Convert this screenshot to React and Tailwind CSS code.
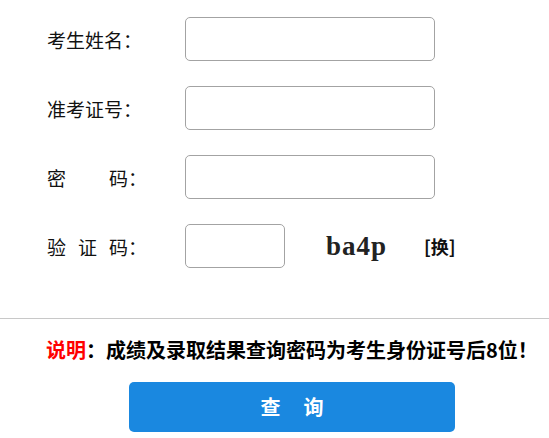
import React, { useState } from 'react';

// --- Score query form (考生成绩查询) ---
const Label = ({ chars, gap }) => (
  <div className="w-[138px] flex items-center text-[19px] text-[#111] leading-none" style={{ columnGap: gap }}>
    {chars.map((c, i) => (
      <span key={i}>{c}{i === chars.length - 1 ? '：' : ''}</span>
    ))}
  </div>
);

const App = () => {
  const [form, setForm] = useState({ name: '', no: '', pwd: '', code: '' });
  const update = (k) => (e) => setForm({ ...form, [k]: e.target.value });

  const inputCls = 'h-[44px] rounded-[5px] border border-[#a3a3a3] bg-white px-2 text-[16px] outline-none';

  return (
    <div className="min-h-screen bg-white font-['Noto_Sans_CJK_SC',sans-serif]">
      {/* Form rows */}
      <div className="pt-[17px] pl-[47px] flex flex-col gap-[25px]">
        <div className="flex items-center">
          <Label chars={['考', '生', '姓', '名']} gap="0px" />
          <input value={form.name} onChange={update('name')} className={`${inputCls} w-[250px]`} />
        </div>
        <div className="flex items-center">
          <Label chars={['准', '考', '证', '号']} gap="0px" />
          <input value={form.no} onChange={update('no')} className={`${inputCls} w-[250px]`} />
        </div>
        <div className="flex items-center">
          <Label chars={['密', '码']} gap="43px" />
          <input type="password" value={form.pwd} onChange={update('pwd')} className={`${inputCls} w-[250px]`} />
        </div>
        <div className="flex items-center">
          <Label chars={['验', '证', '码']} gap="12px" />
          <input value={form.code} onChange={update('code')} className={`${inputCls} w-[100px]`} />
          <span className="ml-[41px] font-['Liberation_Serif',serif] font-bold text-[27px] tracking-[1px] text-[#222] leading-none">ba4p</span>
          <span className="ml-[37px] font-bold text-[18px] text-[#111] leading-none cursor-pointer">[换]</span>
        </div>
      </div>

      {/* Divider */}
      <div className="mt-[50px] border-t border-[#c8c8c8]" />

      {/* Notice */}
      <p className="pt-[17px] pl-[46px] text-[20px] leading-[28px] font-bold text-black whitespace-nowrap">
        <span className="text-[#f00]">说明</span>：成绩及录取结果查询密码为考生身份证号后8位！
      </p>

      {/* Submit */}
      <div className="mt-[18px] pl-[129px]">
        <button className="w-[326px] h-[50px] rounded-[5px] bg-[#1a88e0] text-white text-[20px] font-bold flex items-center justify-center gap-[23px]">
          <span>查</span>
          <span>询</span>
        </button>
      </div>
    </div>
  );
};

export default App;
